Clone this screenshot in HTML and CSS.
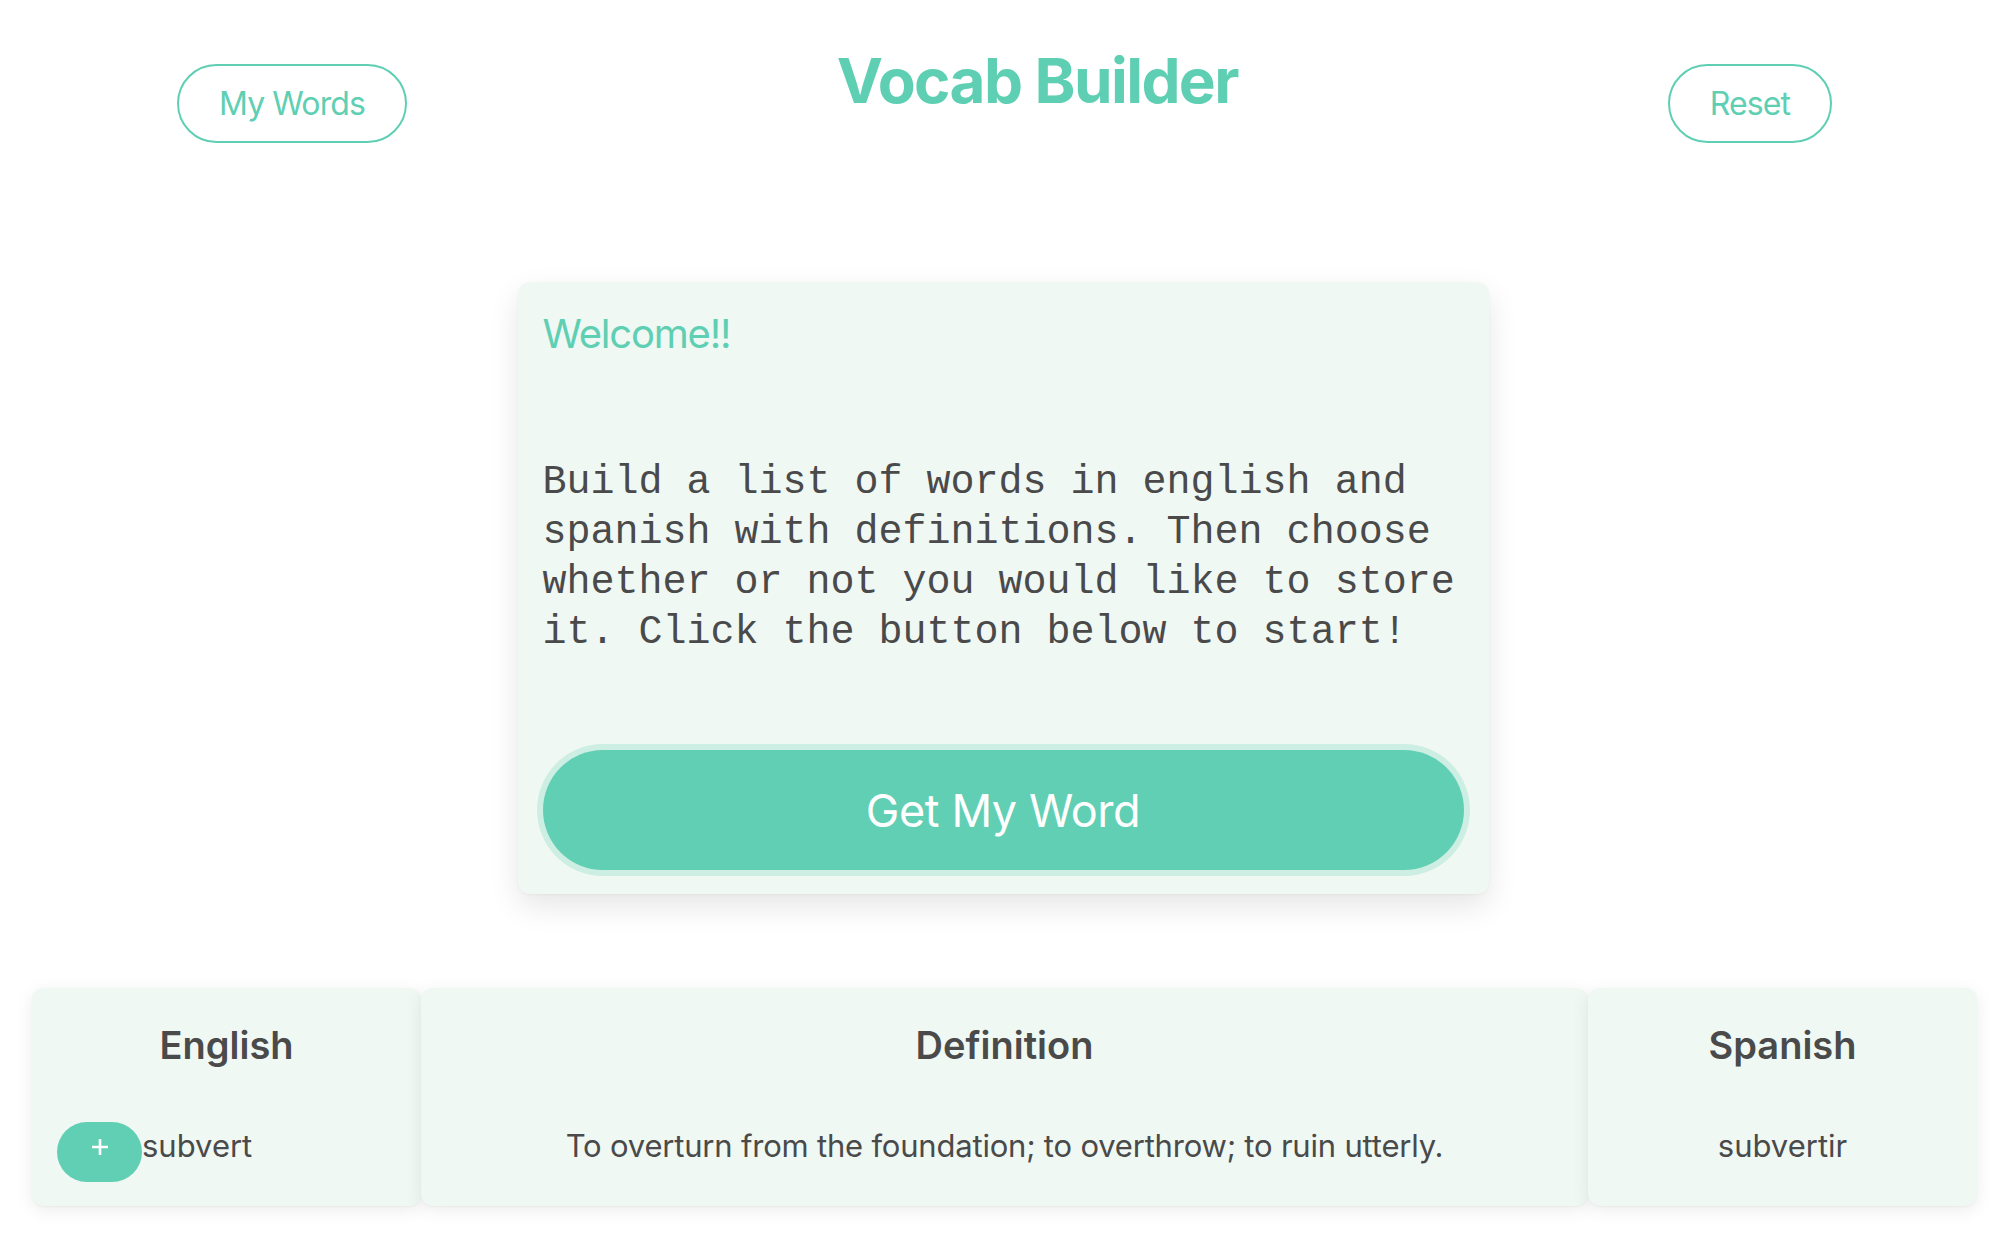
FILE: index.html
```html
<!DOCTYPE html>
<html lang="en">
<head>
<meta charset="utf-8">
<title>Vocab Builder</title>
<link rel="stylesheet" href="styles.css">
</head>
<body>
  <header class="topbar">
    <button class="outline-btn">My Words</button>
    <h1 class="title">Vocab Builder</h1>
    <button class="outline-btn">Reset</button>
  </header>

  <section class="intro-card">
    <h2 class="welcome">Welcome!!</h2>
    <p class="intro-text">Build a list of words in english and spanish with definitions. Then choose whether or not you would like to store it. Click the button below to start!</p>
    <button class="get-btn">Get My Word</button>
  </section>

  <section class="word-table">
    <div class="col-card">
      <h3 class="col-head">English</h3>
      <div class="col-row col-row-left">
        <button class="add-btn" aria-label="add">
          <svg width="20" height="20" viewBox="0 0 20 20"><path d="M10 2V18M2 10H18" stroke="#ffffff" stroke-width="2.6" fill="none"/></svg>
        </button>
        <span class="cell-text">subvert</span>
      </div>
    </div>
    <div class="col-card">
      <h3 class="col-head">Definition</h3>
      <div class="col-row">
        <span class="cell-text cell-def">To overturn from the foundation; to overthrow; to ruin utterly.</span>
      </div>
    </div>
    <div class="col-card">
      <h3 class="col-head">Spanish</h3>
      <div class="col-row">
        <span class="cell-text">subvertir</span>
      </div>
    </div>
  </section>
</body>
</html>
```

FILE: styles.css
```css
* { box-sizing: border-box; }

html, body {
  margin: 0;
  padding: 0;
  background: #ffffff;
}

body {
  font-family: Inter, "Noto Sans", "Liberation Sans", sans-serif;
  color: #4a4a4a;
  width: 2006px;
  min-height: 1244px;
}

.topbar {
  display: flex;
  justify-content: space-between;
  align-items: flex-start;
  padding: 50px 174px 0 177px;
}

.outline-btn {
  margin-top: 14px;
  height: 79px;
  padding: 0 40px;
  border: 2px solid #5fcfb3;
  border-radius: 40px;
  background: #ffffff;
  color: #5fcfb3;
  font-family: Inter, "Noto Sans", sans-serif;
  font-size: 32px;
  font-weight: 400;
  letter-spacing: -0.9px;
  line-height: 1;
  cursor: pointer;
}

.title {
  margin: 0;
  font-size: 62px;
  line-height: 62px;
  font-weight: 700;
  color: #5fcfb3;
  letter-spacing: -1.6px;
}

.intro-card {
  width: 971px;
  margin: 139px auto 0;
  padding: 25px 25px 24px;
  background: #f0f8f4;
  border-radius: 12px;
  box-shadow: 0 12px 30px rgba(0, 0, 0, 0.10), 0 1px 3px rgba(0, 0, 0, 0.04);
}

.welcome {
  margin: 0;
  font-size: 40px;
  line-height: 54px;
  font-weight: 400;
  letter-spacing: -1.2px;
  color: #5fcfb3;
}

.intro-text {
  margin: 97px 0 0;
  font-family: "Liberation Mono", "DejaVu Sans Mono", monospace;
  font-size: 40px;
  line-height: 50px;
  color: #4a4a4a;
}

.get-btn {
  display: block;
  width: 100%;
  height: 120px;
  margin-top: 92px;
  border: none;
  border-radius: 60px;
  background: #61cfb4;
  box-shadow: 0 0 0 6px #cdeee3;
  color: #ffffff;
  font-family: Inter, "Noto Sans", sans-serif;
  font-size: 45px;
  font-weight: 400;
  letter-spacing: -0.4px;
  cursor: pointer;
}

.word-table {
  display: grid;
  grid-template-columns: 1fr 3fr 1fr;
  margin: 94px 29px 0 32px;
}

.col-card {
  background: #f0f8f4;
  border-radius: 12px;
  padding: 25px 25px 24px;
  height: 218px;
  box-shadow: 0 4px 18px rgba(0, 0, 0, 0.08), 0 1px 2px rgba(0, 0, 0, 0.04);
}

.col-head {
  margin: 9px 0 0;
  text-align: center;
  font-size: 38px;
  line-height: 46px;
  font-weight: 600;
  color: #4a4a4a;
}

.col-row {
  display: flex;
  justify-content: center;
  align-items: flex-start;
  height: 60px;
  margin-top: 54px;
}

.col-row-left {
  justify-content: flex-start;
}

.add-btn {
  display: flex;
  align-items: center;
  justify-content: center;
  width: 85px;
  height: 60px;
  padding: 0 0 10px;
  border: none;
  border-radius: 30px;
  background: #61cfb4;
  cursor: pointer;
}

.add-btn svg { display: block; }

.cell-text {
  margin-top: 4px;
  font-size: 31px;
  line-height: 40px;
  color: #4a4a4a;
}

.cell-def {
  letter-spacing: -0.2px;
}
```
